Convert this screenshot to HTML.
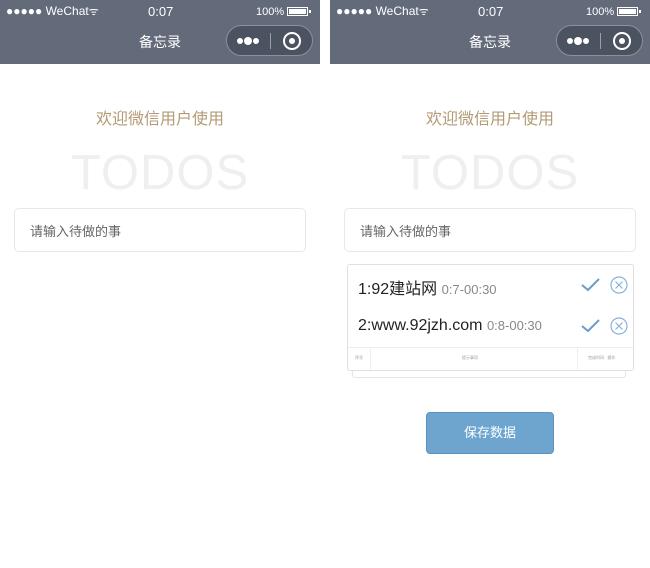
<!DOCTYPE html>
<html><head><meta charset="utf-8"><style>
*{margin:0;padding:0;box-sizing:border-box}
body{width:650px;height:568px;background:#fff;position:relative;overflow:hidden;font-family:"Liberation Sans","Noto Sans CJK SC",sans-serif}
.ph{position:absolute;top:0;width:320px;height:568px;background:#fff}
.nav{position:absolute;left:0;top:0;width:320px;height:64px;background:#636b7b;color:#fff}
.sb{position:absolute;top:4px;font-size:12px}
.title{position:absolute;top:32px;width:100%;text-align:center;font-size:14px}
.cap{position:absolute;left:226px;top:25px;width:87px;height:31px;border-radius:16px;background:#4b5260;border:1px solid #8a909c}
.abs{position:absolute}
.wel{position:absolute;top:105px;width:100%;text-align:center;font-size:16px;color:#b39a74}
.todos{position:absolute;top:145px;width:100%;text-align:center;font-size:49px;color:#efefef;letter-spacing:1px}
.inp{position:absolute;left:14px;top:208px;width:292px;height:44px;border:1px solid #e8e8e8;border-radius:5px;font-size:13px;color:#666;padding:12px 0 0 15px}
</style></head><body>
<div class="ph" style="left:0">
 <div class="nav">
  <div class="sb" style="left:6px">●●●●● WeChat<span style="font-size:11px">ᯤ</span></div>
  <div class="sb" style="left:148px;font-size:13px">0:07</div>
  <div class="sb" style="left:256px;top:6px;font-size:11px">100%</div>
  <div class="abs" style="left:287px;top:7px;width:21px;height:9px;border:1px solid #fff;padding:1px"><div style="background:#fff;width:100%;height:100%"></div></div>
  <div class="abs" style="left:309px;top:10px;width:2px;height:3px;background:#fff"></div>
  <div class="title">备忘录</div>
  <div class="cap">
   <div class="abs" style="left:10px;top:12px;width:6px;height:6px;border-radius:50%;background:#fff"></div>
   <div class="abs" style="left:17px;top:11px;width:8px;height:8px;border-radius:50%;background:#fff"></div>
   <div class="abs" style="left:26px;top:12px;width:6px;height:6px;border-radius:50%;background:#fff"></div>
   <div class="abs" style="left:43px;top:7px;width:1px;height:16px;background:#9aa0aa"></div>
   <div class="abs" style="left:56px;top:6px;width:18px;height:18px;border-radius:50%;border:2px solid #fff"></div>
   <div class="abs" style="left:62px;top:12px;width:6px;height:6px;border-radius:50%;background:#fff"></div>
  </div>
 </div>
 <div class="wel">欢迎微信用户使用</div>
 <div class="todos">TODOS</div>
 <div class="inp">请输入待做的事</div>
</div>
<div class="ph" style="left:330px">
 <div class="nav">
  <div class="sb" style="left:6px">●●●●● WeChat<span style="font-size:11px">ᯤ</span></div>
  <div class="sb" style="left:148px;font-size:13px">0:07</div>
  <div class="sb" style="left:256px;top:6px;font-size:11px">100%</div>
  <div class="abs" style="left:287px;top:7px;width:21px;height:9px;border:1px solid #fff;padding:1px"><div style="background:#fff;width:100%;height:100%"></div></div>
  <div class="abs" style="left:309px;top:10px;width:2px;height:3px;background:#fff"></div>
  <div class="title">备忘录</div>
  <div class="cap">
   <div class="abs" style="left:10px;top:12px;width:6px;height:6px;border-radius:50%;background:#fff"></div>
   <div class="abs" style="left:17px;top:11px;width:8px;height:8px;border-radius:50%;background:#fff"></div>
   <div class="abs" style="left:26px;top:12px;width:6px;height:6px;border-radius:50%;background:#fff"></div>
   <div class="abs" style="left:43px;top:7px;width:1px;height:16px;background:#9aa0aa"></div>
   <div class="abs" style="left:56px;top:6px;width:18px;height:18px;border-radius:50%;border:2px solid #fff"></div>
   <div class="abs" style="left:62px;top:12px;width:6px;height:6px;border-radius:50%;background:#fff"></div>
  </div>
 </div>
 <div class="wel">欢迎微信用户使用</div>
 <div class="todos">TODOS</div>
 <div class="inp">请输入待做的事</div>
 <div class="abs" style="left:22px;top:368px;width:274px;height:10px;border:1px solid #e4e4e4;border-top:none;border-radius:0 0 3px 3px"></div>
 <div class="abs" style="left:17px;top:264px;width:287px;height:107px;border:1px solid #e0e0e0;border-radius:3px;background:#fff">
  <div class="abs" style="left:10px;top:10px;font-size:16px;color:#222;white-space:nowrap">1:92建站网 <span style="font-size:13px;color:#888">0:7-00:30</span></div>
  <div class="abs" style="left:10px;top:52px;font-size:16px;color:#222;white-space:nowrap">2:www.92jzh.com <span style="font-size:13px;color:#888">0:8-00:30</span></div>
  <svg class="abs" style="left:233px;top:12px" width="20" height="16"><path d="M1 8 L7 13 L18 2" fill="none" stroke="#6a9ccc" stroke-width="2"/></svg>
  <svg class="abs" style="left:262px;top:11px" width="18" height="18"><circle cx="9" cy="9" r="8" fill="none" stroke="#8ab0dc" stroke-width="1.2"/><path d="M5.5 5.5L12.5 12.5M12.5 5.5L5.5 12.5" stroke="#8ab0dc" stroke-width="1.2"/></svg>
  <svg class="abs" style="left:233px;top:53px" width="20" height="16"><path d="M1 8 L7 13 L18 2" fill="none" stroke="#6a9ccc" stroke-width="2"/></svg>
  <svg class="abs" style="left:262px;top:52px" width="18" height="18"><circle cx="9" cy="9" r="8" fill="none" stroke="#8ab0dc" stroke-width="1.2"/><path d="M5.5 5.5L12.5 12.5M12.5 5.5L5.5 12.5" stroke="#8ab0dc" stroke-width="1.2"/></svg>
  <div class="abs" style="left:0;top:82px;width:285px;height:1px;background:#eee"></div>
  <div class="abs" style="left:22px;top:82px;width:1px;height:23px;background:#eee"></div>
  <div class="abs" style="left:229px;top:82px;width:1px;height:23px;background:#eee"></div>
  <div class="abs" style="left:7px;top:90px;font-size:4px;color:#999">序号</div>
  <div class="abs" style="left:114px;top:90px;font-size:4px;color:#99a">提示事项</div>
  <div class="abs" style="left:240px;top:90px;font-size:4px;color:#99a">完成时间 &nbsp; 操作</div>
 </div>
 <div class="abs" style="left:96px;top:412px;width:128px;height:42px;background:#6da5cf;border:1px solid #5e92bc;border-radius:4px;color:#fff;font-size:13px;text-align:center;line-height:40px">保存数据</div>
</div>
</body></html>
